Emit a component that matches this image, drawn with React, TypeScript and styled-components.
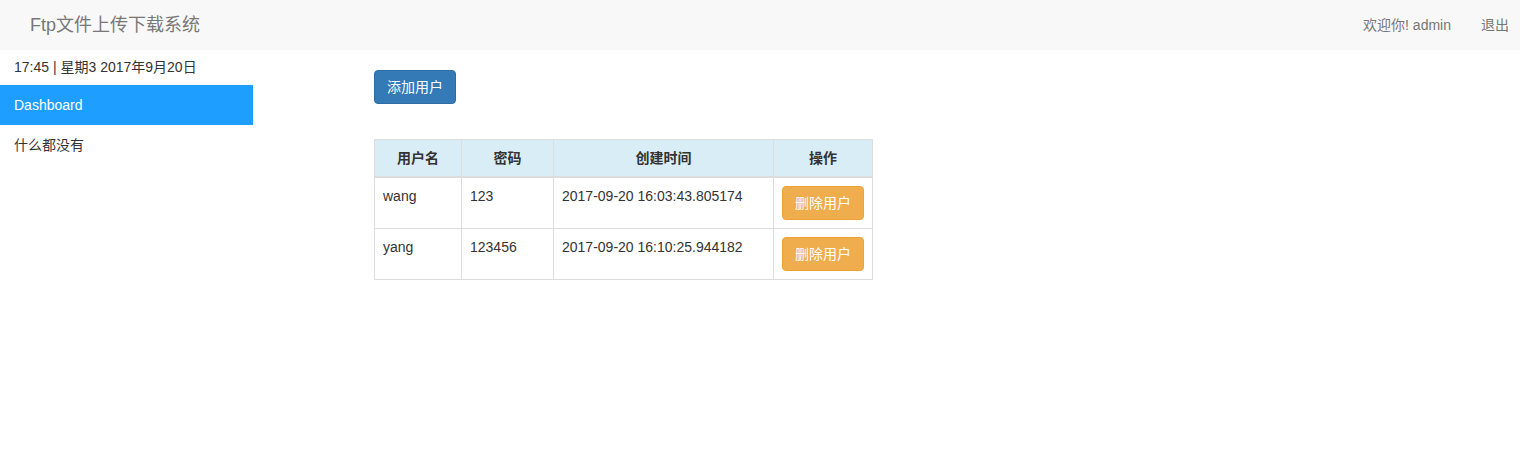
import React from "react";
import styled, { createGlobalStyle } from "styled-components";

const Global = createGlobalStyle`
  html, body { margin: 0; padding: 0; background: #fff; }
  body {
    font-family: "Liberation Sans", Arial, "Noto Sans CJK SC", sans-serif;
    font-size: 14px;
    line-height: 20px;
    color: #333;
  }
  * { box-sizing: border-box; }
`;

const Navbar = styled.header`
  height: 50px;
  background: #f8f8f8;
  display: flex;
  align-items: center;
  justify-content: space-between;
  padding: 0 11px 0 30px;
`;

const Brand = styled.a`
  font-size: 18px;
  line-height: 20px;
  color: #777;
  text-decoration: none;
`;

const NavRight = styled.nav`
  display: flex;
  gap: 30px;
`;

const NavLink = styled.a`
  color: #777;
  text-decoration: none;
  font-size: 14px;
`;

const Body = styled.div`
  display: flex;
`;

const Sidebar = styled.aside`
  width: 253px;
  flex: none;
`;

const Clock = styled.div`
  padding: 7px 14px 8px;
  height: 35px;
  color: #333;
`;

const NavItem = styled.a<{ $active?: boolean }>`
  display: block;
  height: 40px;
  line-height: 40px;
  padding: 0 14px;
  text-decoration: none;
  color: ${(p) => (p.$active ? "#fff" : "#333")};
  background: ${(p) => (p.$active ? "#1e9fff" : "transparent")};
`;

const Main = styled.main`
  padding: 20px 0 0 121px;
`;

const Toolbar = styled.div`
  display: flex;
  height: 34px;
`;

const Btn = styled.button<{ $variant: "primary" | "warning" }>`
  display: inline-block;
  font-family: inherit;
  font-size: 14px;
  line-height: 20px;
  padding: 6px 12px;
  border-radius: 4px;
  cursor: pointer;
  color: #fff;
  border: 1px solid ${(p) => (p.$variant === "primary" ? "#2e6da4" : "#eea236")};
  background: ${(p) => (p.$variant === "primary" ? "#337ab7" : "#f0ad4e")};
`;

const Table = styled.table`
  margin-top: 35px;
  border-collapse: collapse;
  border: 1px solid #ddd;
`;

const Th = styled.th<{ $w: number }>`
  width: ${(p) => p.$w}px;
  padding: 8px;
  text-align: center;
  font-weight: bold;
  background: #d9edf7;
  border: 1px solid #ddd;
  border-bottom: 2px solid #ddd;
  line-height: 20px;
`;

const Td = styled.td`
  padding: 8px;
  vertical-align: top;
  border: 1px solid #ddd;
  line-height: 20px;
`;

const users = [
  { name: "wang", pwd: "123", time: "2017-09-20 16:03:43.805174" },
  { name: "yang", pwd: "123456", time: "2017-09-20 16:10:25.944182" },
];

export default function App() {
  return (
    <>
      <Global />
      <Navbar>
        <Brand href="#">Ftp文件上传下载系统</Brand>
        <NavRight>
          <NavLink href="#">欢迎你! admin</NavLink>
          <NavLink href="#">退出</NavLink>
        </NavRight>
      </Navbar>
      <Body>
        <Sidebar>
          <Clock>17:45 | 星期3 2017年9月20日</Clock>
          <NavItem href="#" $active>
            Dashboard
          </NavItem>
          <NavItem href="#">什么都没有</NavItem>
        </Sidebar>
        <Main>
          <Toolbar>
            <Btn $variant="primary">添加用户</Btn>
          </Toolbar>
          <Table>
            <thead>
              <tr>
                <Th $w={87}>用户名</Th>
                <Th $w={92}>密码</Th>
                <Th $w={220}>创建时间</Th>
                <Th $w={99}>操作</Th>
              </tr>
            </thead>
            <tbody>
              {users.map((u) => (
                <tr key={u.name}>
                  <Td>{u.name}</Td>
                  <Td>{u.pwd}</Td>
                  <Td>{u.time}</Td>
                  <Td>
                    <Btn $variant="warning">删除用户</Btn>
                  </Td>
                </tr>
              ))}
            </tbody>
          </Table>
        </Main>
      </Body>
    </>
  );
}
